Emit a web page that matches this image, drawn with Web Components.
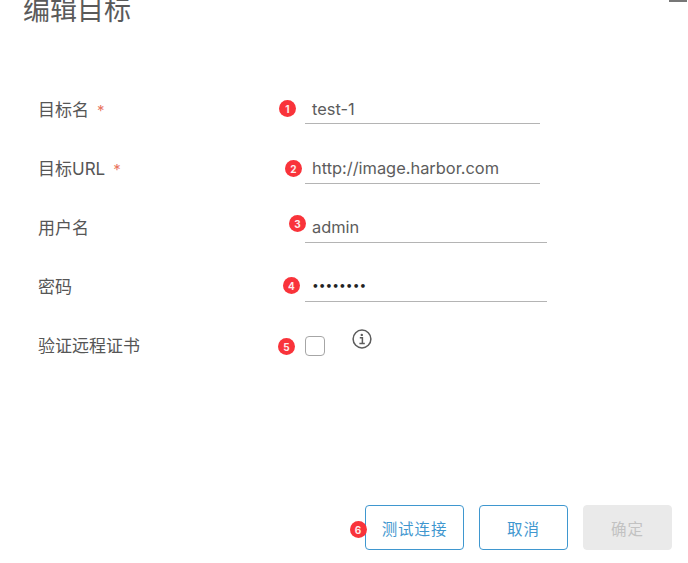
<!DOCTYPE html>
<html lang="zh">
<head>
<meta charset="utf-8">
<title>编辑目标</title>
<style>
  html, body { margin: 0; padding: 0; height: 100%; background: #fff; overflow: hidden; }
  body { font-family: "Inter", "Noto Sans CJK SC", sans-serif; color: #565656; }
  text-field[tall] { height: 31px; }
</style>
</head>
<body>
<edit-dialog>
  <form-row label="目标名" required>
    <text-field width="235" value="test-1"><number-badge n="1" style="--x:-26px;--y:6px"></number-badge></text-field>
  </form-row>
  <form-row label="目标URL" required>
    <text-field tall width="235" value="http://image.harbor.com"><number-badge n="2" style="--x:-20px;--y:7px"></number-badge></text-field>
  </form-row>
  <form-row label="用户名">
    <text-field tall width="242" value="admin"><number-badge n="3" style="--x:-16px;--y:3px"></number-badge></text-field>
  </form-row>
  <form-row label="密码">
    <text-field tall width="242" value="••••••••" secret><number-badge n="4" style="--x:-22px;--y:6px"></number-badge></text-field>
  </form-row>
  <form-row label="验证远程证书">
    <check-field><number-badge n="5" style="--x:-27px;--y:8px"></number-badge></check-field>
  </form-row>
  <dialog-button slot="footer" width="99">测试连接<number-badge n="6" style="--x:-16px;--y:15px"></number-badge></dialog-button>
  <dialog-button slot="footer" width="89">取消</dialog-button>
  <dialog-button slot="footer" width="89" disabled>确定</dialog-button>
</edit-dialog>

<script>
  class EditDialog extends HTMLElement {
    constructor() {
      super();
      this.attachShadow({ mode: "open" });
      this.shadowRoot.innerHTML = /* html */ `
        <style>
          :host { display: flex; flex-direction: column; position: relative; height: 563px; box-sizing: border-box; overflow: hidden; }
          h1 { margin: -10px 0 0 23px; height: 44px; font: 400 27px/38px "Noto Sans CJK SC", sans-serif; color: #5a5a5a; }
          .rows { display: flex; flex-direction: column; margin: 60px 0 0 38px; }
          .footer { display: flex; justify-content: flex-end; gap: 15px; margin: auto 16px 13px 0; }
          .close { position: absolute; top: 0; right: 1px; width: 18px; height: 2px; background: #777; }
        </style>
        <h1>编辑目标</h1>
        <div class="close"></div>
        <div class="rows"><slot></slot></div>
        <div class="footer"><slot name="footer"></slot></div>
      `;
    }
  }

  class FormRow extends HTMLElement {
    constructor() {
      super();
      this.attachShadow({ mode: "open" });
    }

    connectedCallback() {
      const star = this.hasAttribute("required") ? `<span class="star">*</span>` : "";
      this.shadowRoot.innerHTML = /* html */ `
        <style>
          :host { display: grid; grid-template-columns: 267px 1fr; height: 59px; align-items: start; }
          .label { font: 400 17px/24px "Inter", "Noto Sans CJK SC", sans-serif; color: #565656; padding-top: 4px; }
          .star { color: #e9765f; font-size: 15px; margin-left: 8px; }
        </style>
        <div class="label">${this.getAttribute("label")}${star}</div>
        <slot></slot>
      `;
    }
  }

  class TextField extends HTMLElement {
    constructor() {
      super();
      this.attachShadow({ mode: "open" });
    }

    connectedCallback() {
      const secret = this.hasAttribute("secret");
      this.shadowRoot.innerHTML = /* html */ `
        <style>
          :host { display: block; position: relative; width: ${this.getAttribute("width")}px; height: 30px; box-sizing: border-box; border-bottom: 1px solid #b4b4b4; }
          .value { padding: 3px 0 0 7px; font: 400 16.4px/24px "Inter", sans-serif; color: ${secret ? "#222" : "#5c5c5c"}; }
          .secret { font-family: "DejaVu Sans", sans-serif; font-size: 10.6px; font-weight: 700; letter-spacing: 0; }
        </style>
        <div class="value ${secret ? "secret" : ""}">${this.getAttribute("value")}</div>
        <slot></slot>
      `;
    }
  }

  class CheckField extends HTMLElement {
    constructor() {
      super();
      this.attachShadow({ mode: "open" });
      this.shadowRoot.innerHTML = /* html */ `
        <style>
          :host { display: flex; position: relative; height: 40px; align-items: flex-start; gap: 26px; }
          .box { width: 20px; height: 20px; margin-top: 6px; box-sizing: border-box; border: 1px solid #a6a6a6; border-radius: 4px; background: #fff; }
          svg { width: 22px; height: 22px; display: block; margin-top: -2px; }
        </style>
        <div class="box"></div>
        <svg viewBox="0 0 22 22" fill="none" stroke="#5c5c5c">
          <circle cx="11" cy="11" r="8.9" stroke-width="1.5"/>
          <circle cx="10.8" cy="6.9" r="1.2" fill="#5c5c5c" stroke="none"/>
          <path d="M8.8 9.8h2.6v5.6M8.4 15.6h5.4" stroke-width="1.5"/>
        </svg>
        <slot></slot>
      `;
    }
  }

  class NumberBadge extends HTMLElement {
    constructor() {
      super();
      this.attachShadow({ mode: "open" });
    }

    connectedCallback() {
      this.shadowRoot.innerHTML = /* html */ `
        <style>
          :host { display: flex; align-items: center; justify-content: center; position: absolute; left: var(--x); top: var(--y); width: 17px; height: 17px; margin: 0; border-radius: 50%; background: #f9333a; }
          span { font: 700 10px/1 "Inter", sans-serif; color: #fff; opacity: .9; }
        </style>
        <span>${this.getAttribute("n")}</span>
      `;
    }
  }

  class DialogButton extends HTMLElement {
    constructor() {
      super();
      this.attachShadow({ mode: "open" });
    }

    connectedCallback() {
      this.shadowRoot.innerHTML = /* html */ `
        <style>
          :host { display: flex; position: relative; align-items: center; justify-content: center; width: ${this.getAttribute("width")}px; height: 45px; box-sizing: border-box; border: 1px solid #3f97cf; border-radius: 4px; font: 400 15.5px "Noto Sans CJK SC", sans-serif; letter-spacing: .9px; color: #3f97cf; background: #fff; }
          :host([disabled]) { border-color: #eaeaea; background: #eaeaea; color: #c2c2c2; }
        </style>
        <slot></slot>
      `;
    }
  }

  customElements.define("edit-dialog", EditDialog);
  customElements.define("form-row", FormRow);
  customElements.define("text-field", TextField);
  customElements.define("check-field", CheckField);
  customElements.define("number-badge", NumberBadge);
  customElements.define("dialog-button", DialogButton);
</script>
</body>
</html>
